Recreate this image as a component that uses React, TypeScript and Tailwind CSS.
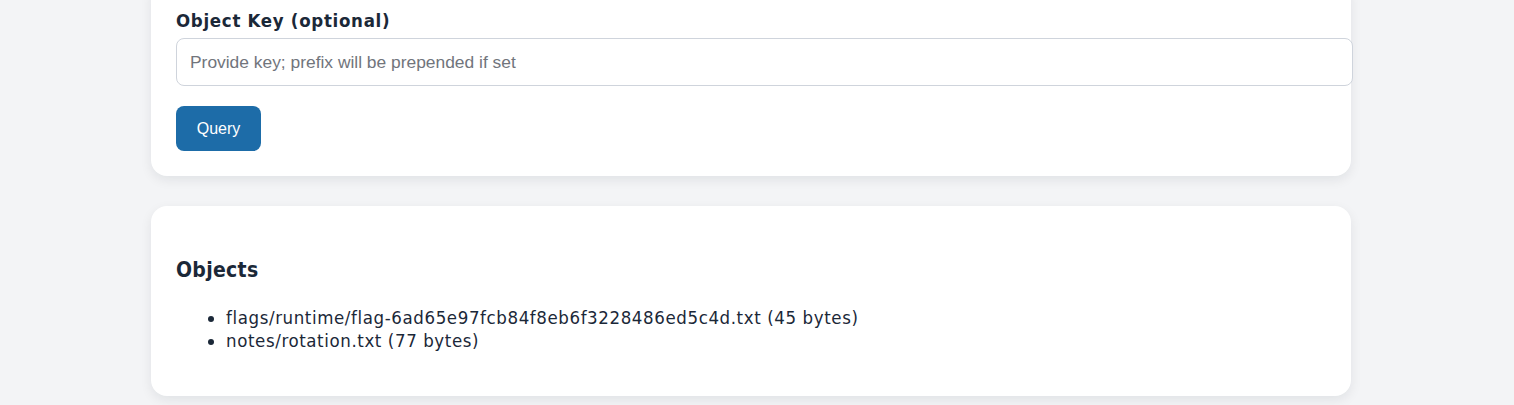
export default function App() {
  return (
    <div className="min-h-screen bg-[#f3f4f6] font-['DejaVu_Sans_Condensed','DejaVu_Sans',sans-serif] text-[#1b2838]">
      <div className="ml-[151px] w-[1200px] flex flex-col gap-[30px] -mt-[18px] pb-[10px]">
        <section className="bg-white rounded-2xl shadow-[0_4px_12px_rgba(15,23,42,0.08)] p-[25px]">
          <label className="block font-bold text-[18.5px] tracking-[0.7px] leading-[28px] mb-[3px]">Object Key (optional)</label>
          <input
            type="text"
            placeholder="Provide key; prefix will be prepended if set"
            className="w-[calc(100%+27px)] h-[48px] px-[13px] rounded-lg border border-[#cfd4dc] bg-white font-['Liberation_Sans',Arial,sans-serif] text-[17.4px] placeholder:text-[#71757c] outline-none"
          />
          <button className="mt-[20px] w-[85px] h-[45px] rounded-lg bg-[#1d6ca8] text-white font-['Liberation_Sans',Arial,sans-serif] text-[16px]">
            Query
          </button>
        </section>
        <section className="bg-white rounded-2xl shadow-[0_4px_12px_rgba(15,23,42,0.08)] px-[25px] pt-[51px] pb-[44px]">
          <h2 className="font-bold text-[21px] tracking-[0.3px] leading-[26px]">Objects</h2>
          <ul className="list-disc pl-[50px] mt-[23px] text-[18.5px] tracking-[0.6px] leading-[23px]">
            <li>flags/runtime/flag-6ad65e97fcb84f8eb6f3228486ed5c4d.txt (45 bytes)</li>
            <li>notes/rotation.txt (77 bytes)</li>
          </ul>
        </section>
      </div>
    </div>
  );
}
